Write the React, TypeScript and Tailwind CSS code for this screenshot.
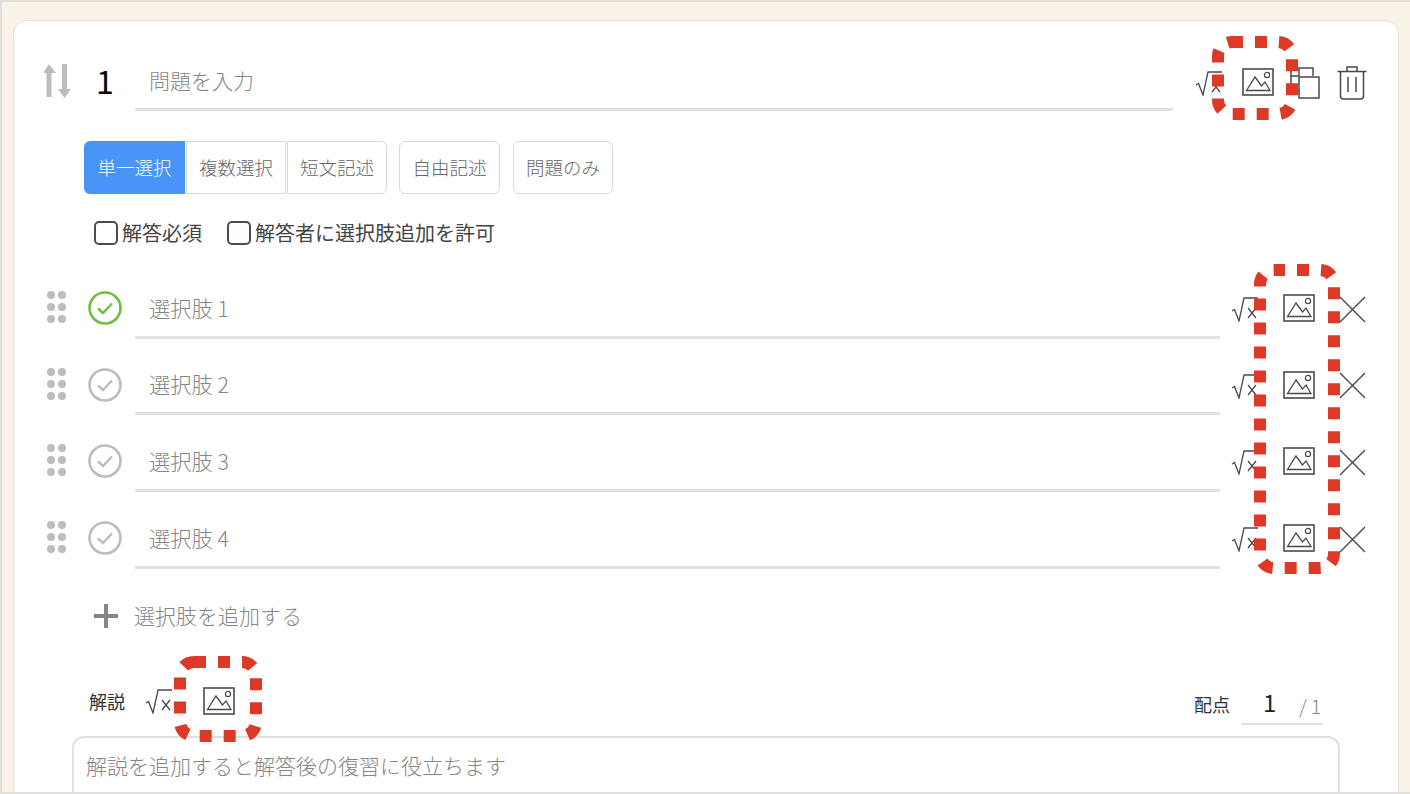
import React from 'react';

const FONT = 'font-["Noto_Sans_CJK_JP","Noto_Sans",sans-serif]';

function SqrtIcon({ className = '' }: { className?: string }) {
  return (
    <svg viewBox="0 0 28 26" className={`w-[28px] h-[26px] shrink-0 ${className}`} fill="none" stroke="#4a4a4a" strokeWidth="1.3">
      <path d="M1 15 L3.5 13.5 L8 25 L13 2 H27" />
      <path d="M17 12 L25 22 M25 12 L17 22" />
    </svg>
  );
}

function ImageIcon({ className = '' }: { className?: string }) {
  return (
    <svg viewBox="0 0 32 28" className={`w-[32px] h-[28px] shrink-0 ${className}`} fill="none" stroke="#4a4a4a">
      <rect x="1" y="1" width="30" height="26" strokeWidth="1.6" />
      <path d="M4.5 22.5 L13 9 L19.5 18 L23 14 L28 22.5 Z" strokeWidth="1.3" />
      <circle cx="25" cy="7" r="2.6" strokeWidth="1.2" />
    </svg>
  );
}

function CopyIcon() {
  return (
    <svg viewBox="0 0 30 32" className="w-[30px] h-[32px] shrink-0" fill="none" stroke="#4a4a4a" strokeWidth="1.5">
      <path d="M9 9 V1 H23 V9" />
      <path d="M9 9 H1 M1 1 V24 H9" />
      <rect x="9" y="10" width="20" height="21" />
    </svg>
  );
}

function TrashIcon() {
  return (
    <svg viewBox="0 0 30 34" className="w-[30px] h-[34px] shrink-0" fill="none" stroke="#4a4a4a" strokeWidth="1.5">
      <path d="M0.5 5.5 H29.5" />
      <path d="M10 5 V1 H20 V5" />
      <path d="M3.5 6 V30 Q3.5 33 6.5 33 H23.5 Q26.5 33 26.5 30 V6" />
      <path d="M11 11 V26 M19 11 V26" />
    </svg>
  );
}

function CrossIcon() {
  return (
    <svg viewBox="0 0 27 27" className="ml-[24px] w-[27px] h-[27px] shrink-0" fill="none" stroke="#4a4a4a" strokeWidth="1.4">
      <path d="M1 1 L26 26 M26 1 L1 26" />
    </svg>
  );
}

function SortIcon() {
  return (
    <svg viewBox="0 0 27 34" className="w-[27px] h-[34px] shrink-0 mb-[3px]" fill="#bcbcbc">
      <path d="M5 0 L12 9 H7.5 V33 H2.5 V9 H-1 Z" />
      <path d="M18 0 H23 V25 H27 L20.5 34 L14 25 H18 Z" />
    </svg>
  );
}

function DragDots() {
  return (
    <svg viewBox="0 0 20 32" className="w-[20px] h-[32px] shrink-0 mb-[4px]" fill="#bdbdbd">
      <circle cx="4" cy="4" r="4" />
      <circle cx="15" cy="4" r="4" />
      <circle cx="4" cy="16" r="4" />
      <circle cx="15" cy="16" r="4" />
      <circle cx="4" cy="28" r="4" />
      <circle cx="15" cy="28" r="4" />
    </svg>
  );
}

function CheckCircle({ active }: { active?: boolean }) {
  const c = active ? '#6fbf3f' : '#bdbdbd';
  return (
    <svg viewBox="0 0 34 34" className="w-[34px] h-[34px] shrink-0 mb-[2px]" fill="none" stroke={c}>
      <circle cx="17" cy="17" r="15.5" strokeWidth="2.6" />
      <path d="M10 17.5 L15 22 L24 12.5" strokeWidth="2.4" />
    </svg>
  );
}

function Checkbox({ label }: { label: string }) {
  return (
    <div className="flex items-center">
      <div className="w-[24px] h-[24px] rounded-[5px] border-2 border-[#544a45] bg-white" />
      <span className="ml-[4px] text-[20px] leading-[24px] text-[#444] whitespace-nowrap">{label}</span>
    </div>
  );
}

function OptionRow({ n, active }: { n: number; active?: boolean }) {
  return (
    <div className="h-[76.67px] flex items-end">
      <div className="h-[59px] flex items-center w-full">
        <div className="ml-[3px] w-[41px]">
          <DragDots />
        </div>
        <CheckCircle active={active} />
        <div className="ml-[13px] w-[1085px] h-full flex items-center pl-[14px] border-b-[3px] border-[#e2e2e2] text-[21.3px] text-[#858585] font-light">
          選択肢 {n}
        </div>
        <SqrtIcon className="ml-[11px]" />
        <ImageIcon className="ml-[24px] mb-[2px]" />
        <CrossIcon />
      </div>
    </div>
  );
}

function Dashed({ x, y, w, h, offset }: { x: number; y: number; w: number; h: number; offset: number }) {
  return (
    <svg
      className="absolute pointer-events-none"
      style={{ left: x - 8, top: y - 8, width: w + 16, height: h + 16 }}
      fill="none"
    >
      <rect x="8" y="8" width={w} height={h} rx="14" stroke="#dc3a26" strokeWidth="12" strokeDasharray="12 12" strokeDashoffset={offset} />
    </svg>
  );
}

const tabClass = 'h-[53px] flex items-center justify-center bg-white border border-[#d9d9d9] text-[18.5px] text-[#666] font-light';

export default function App() {
  return (
    <div className={`relative w-[1410px] h-[794px] overflow-hidden bg-[#f8f2e7] border-t-2 border-b-2 border-l-2 border-[#e0dedb] ${FONT}`}>
      <div className="ml-[11px] mt-[18px] w-[1386px] h-[900px] bg-white rounded-[14px] border border-[#e6e1d7] pl-[30px] pr-[31px] pt-[33px]">
        {/* question header */}
        <div className="h-[57px] flex items-center">
          <SortIcon />
          <div className="w-[64px] pl-[25px] pb-[5px] text-[32px] leading-none text-black">1</div>
          <div className="w-[1039px] h-full flex items-center pl-[14px] border-b-[3px] border-[#e2e2e2] text-[21px] text-[#858585] font-light">
            問題を入力
          </div>
          <SqrtIcon className="ml-[22px]" />
          <ImageIcon className="ml-[19px] mb-[2px]" />
          <div className="ml-[16px]"><CopyIcon /></div>
          <div className="ml-[17px]"><TrashIcon /></div>
        </div>

        {/* type tabs */}
        <div className="ml-[40px] mt-[30px] flex">
          <div className="h-[53px] w-[101px] flex items-center justify-center bg-[#4895f7] rounded-l-[6px] text-[18.5px] text-white font-light">単一選択</div>
          <div className={`${tabClass} w-[100px] ml-px`}>複数選択</div>
          <div className={`${tabClass} w-[100px] ml-px mr-[12px] rounded-r-[6px]`}>短文記述</div>
          <div className={`${tabClass} w-[101px] rounded-[6px] mr-[13px]`}>自由記述</div>
          <div className={`${tabClass} w-[100px] rounded-[6px]`}>問題のみ</div>
        </div>

        <div className="ml-[50px] mt-[27px] flex gap-[25px]">
          <Checkbox label="解答必須" />
          <Checkbox label="解答者に選択肢追加を許可" />
        </div>

        {/* choices */}
        <div className="mt-[17px]">
          <OptionRow n={1} active />
          <OptionRow n={2} />
          <OptionRow n={3} />
          <OptionRow n={4} />
        </div>

        <div className="mt-[27px] h-[40px] flex items-center ml-[49px]">
          <svg viewBox="0 0 26 26" className="w-[26px] h-[26px]" fill="none" stroke="#868686" strokeWidth="4">
            <path d="M13 1 V25 M1 13 H25" />
          </svg>
          <span className="ml-[15px] text-[21px] text-[#858585] font-light">選択肢を追加する</span>
        </div>

        {/* explanation */}
        <div className="mt-[46px] h-[43px] flex items-center">
          <div className="flex items-center mb-[4px]">
            <span className="ml-[45px] text-[18px] text-[#333]">解説</span>
            <SqrtIcon className="ml-[20px]" />
            <ImageIcon className="ml-[30px]" />
          </div>
          <div className="ml-auto mr-[44px] flex items-center h-full">
            <span className="text-[18px] text-[#333] mt-[3px]">配点</span>
            <div className="ml-[11px] w-[82px] h-full flex items-center border-b-2 border-[#e2e2e2]">
              <span className="ml-[22px] text-[24px] leading-none text-[#222]">1</span>
              <span className="ml-[23px] mt-[6px] text-[19px] leading-none text-[#858585] font-light">/ 1</span>
            </div>
          </div>
        </div>

        <div className="ml-[28px] mr-[27px] mt-[11px] h-[120px] rounded-[12px] border-2 border-[#e0e0e0] pl-[12px] pt-[11px] text-[21px] leading-[32px] text-[#858585] font-light">
          解説を追加すると解答後の復習に役立ちます
        </div>
      </div>

      <div className="absolute left-[-2px] top-[-2px]">
        <Dashed x={1218} y={42} w={74} h={72} offset={1} />
        <Dashed x={1260} y={270} w={74} h={298} offset={1} />
        <Dashed x={180} y={662} w={76} h={74} offset={0} />
      </div>
    </div>
  );
}
